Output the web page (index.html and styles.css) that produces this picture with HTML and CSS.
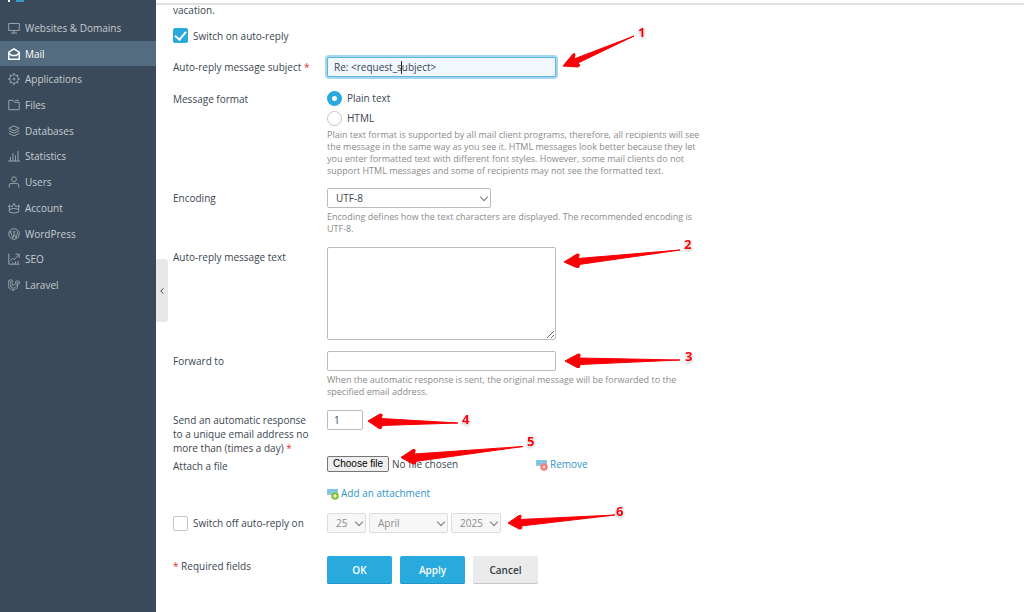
FILE: index.html
```html
<!DOCTYPE html>
<html lang="en">
<head>
    <meta charset="UTF-8">
    <meta name="viewport" content="width=device-width, initial-scale=1.0">
    <title>Auto-Reply</title>
    <link rel="stylesheet" href="styles.css">
</head>
<body>
    <aside class="sidebar">
        <svg class="logo" width="18" height="3" viewBox="0 0 18 3"><path d="M0 0h2v2H0z" fill="#fff"/><path d="M8 0h8v2H8z" fill="#3a9bc8"/></svg>
        <nav class="menu">
            <a href="#"><svg viewBox="0 0 12 12"><path d="M.7 1.5h10.6v7H.7zM3 11h6M6 8.5V11"/></svg>Websites &amp; Domains</a>
            <a href="#" class="active"><svg viewBox="0 0 12 12"><path d="M.8 4.2 6 .9l5.2 3.3v7H.8zM.8 5l3 2.6h4.4l3-2.6"/></svg>Mail</a>
            <a href="#"><svg viewBox="0 0 12 12"><circle cx="6" cy="6" r="4.2"/><circle cx="6" cy="6" r="1"/><path stroke-width="1.6" d="M6 .3v1.5M6 10.2v1.5M.3 6h1.5M10.2 6h1.5M2 2l1 1M9 9l1 1M2 10l1-1M9 3l1-1"/></svg>Applications</a>
            <a href="#"><svg viewBox="0 0 12 12"><path d="M6.5 3.3 5 1.3H.8v9.4h10.4V3.3zM7 1.3h4"/></svg>Files</a>
            <a href="#"><svg viewBox="0 0 12 12"><path d="M6 .8 11.2 3.3 6 5.8.8 3.3zM.8 5.7 6 8.2l5.2-2.5M.8 8.3 6 10.9l5.2-2.6"/></svg>Databases</a>
            <a href="#"><svg viewBox="0 0 12 12"><path d="M0 11h12M2.5 7v4M5 3v8M7.5 5.5V11M10 1v10"/></svg>Statistics</a>
            <a href="#"><svg viewBox="0 0 12 12"><circle cx="6" cy="3.2" r="2.4"/><path d="M1.2 11.7V9.4q0-2 2-2h5.6q2 0 2 2v2.3"/></svg>Users</a>
            <a href="#"><svg viewBox="0 0 12 12"><path d="M1.3 10V3L4 5l2-3.8L8 5l2.7-2v7q-4.700 2.200-9.400 0zM1.300 7.300q4.700-1.800 9.400 0M0 4.500h1.300M10.700 4.500H12"/></svg>Account</a>
            <a href="#"><svg viewBox="0 0 12 12"><circle cx="6" cy="6" r="5.3"/><path d="M1.500 3.800h2.300M5 3.800h2.500M2.500 4l2.300 6L6.200 6M5.600 4l2.300 6 1.400-4.200q.4-1.400-.6-2.300"/></svg>WordPress</a>
            <a href="#"><svg viewBox="0 0 12 12"><path d="M.8.5v10.700h10.700M2.500 7.500l2.300-2.300 1.500 1.500L11 1.500M7.500 1.200h3.700v3.700M5 11V9.500M7.500 11V8.500M10 11V8"/></svg>SEO</a>
            <a href="#"><svg viewBox="0 0 12 12"><path stroke-width=".8" d="M.6 1.500 2.400.6l1.900.9v5.200l-1.900 1.100M.6 1.500v7.300l4.500 2.700 4.400-2.700V5.900l1.900-1V2.700L9.500 1.600 7.600 2.700v2.200l1.900 1M2.400 2.500v5.300l2.700 1.600 4.400-2.600M2.400 2.500.6 1.500M2.400 2.500l1.900-1M7.600 4.900 4.300 6.700M9.500 3.800V5.900M7.600 2.700l1.900 1.100 1.900-1.100M5.100 9.400v2.100"/></svg>Laravel</a>
        </nav>
        <button class="collapse" type="button" aria-label="Collapse menu"><svg width="4" height="8" viewBox="0 0 4 8"><path d="M3.400 1.300.8 4l2.600 2.700"/></svg></button>
    </aside>

    <main class="content">
        <form class="form">
            <p class="intro">vacation.</p>
            <label class="check-row switch-on"><input type="checkbox" class="check" checked>Switch on auto-reply</label>

            <div class="row row-subject">
                <label for="subject">Auto-reply message subject <span class="req">*</span></label>
                <div class="subject-field">
                    <input type="text" id="subject" class="text focused" value="Re: &lt;request_subject&gt;">
                    <span class="caret"></span>
                </div>
            </div>

            <div class="row row-format">
                <span class="label">Message format</span>
                <div>
                    <label class="radio-row"><input type="radio" name="format" class="radio" checked>Plain text</label>
                    <label class="radio-row"><input type="radio" name="format" class="radio">HTML</label>
                    <p class="hint">Plain text format is supported by all mail client programs, therefore, all recipients will see the message in the same way as you see it. HTML messages look better because they let you enter formatted text with different font styles. However, some mail clients do not support HTML messages and some of recipients may not see the formatted text.</p>
                </div>
            </div>

            <div class="row row-encoding">
                <label for="encoding">Encoding</label>
                <div>
                    <span class="select encoding"><select id="encoding"><option>UTF-8</option></select></span>
                    <p class="hint">Encoding defines how the text characters are displayed. The recommended encoding is UTF-8.</p>
                </div>
            </div>

            <div class="row row-text">
                <label for="message">Auto-reply message text</label>
                <textarea id="message" class="text"></textarea>
            </div>

            <div class="row row-forward">
                <label for="forward">Forward to</label>
                <div>
                    <input type="text" id="forward" class="text">
                    <p class="hint">When the automatic response is sent, the original message will be forwarded to the specified email address.</p>
                </div>
            </div>

            <div class="row row-times">
                <label for="times">Send an automatic response to a unique email address no more than (times a day) <span class="req">*</span></label>
                <input type="text" id="times" class="text short" value="1">
            </div>

            <div class="row row-attach">
                <span class="label">Attach a file</span>
                <div>
                    <div class="attach">
                        <div class="file">
                            <input type="file" id="file">
                            <label for="file" class="file-button">Choose file</label>
                            <span>No file chosen</span>
                        </div>
                        <a href="#"><svg class="attach-icon" viewBox="0 0 12 12"><path d="M0 1h11v6H0z" fill="#8ccbe8"/><path d="M1 2.500h2M4 2.500h2M7 2.500h3M1 4.500h3" stroke="#6dbbe0"/><circle cx="8" cy="8" r="3.800" fill="#f77f7f"/><circle cx="8" cy="8" r="1.200" fill="#fff"/></svg>Remove</a>
                    </div>
                    <a href="#"><svg class="attach-icon" viewBox="0 0 12 12"><path d="M0 1h11v6H0z" fill="#8ccbe8"/><path d="M1 2.500h2M4 2.500h2M7 2.500h3M1 4.500h3" stroke="#6dbbe0"/><circle cx="8" cy="8" r="3.800" fill="#83c133"/><path d="M8 6v4M6 8h4" stroke="#fff"/></svg>Add an attachment</a>
                </div>
            </div>

            <div class="row row-date">
                <label class="check-row"><input type="checkbox" class="check">Switch off auto-reply on</label>
                <div class="dates">
                    <span class="select day"><select aria-label="Day" disabled><option>25</option></select></span>
                    <span class="select month"><select aria-label="Month" disabled><option>April</option></select></span>
                    <span class="select year"><select aria-label="Year" disabled><option>2025</option></select></span>
                </div>
            </div>

            <div class="row row-buttons">
                <span class="label"><span class="req">*</span> Required fields</span>
                <div class="buttons">
                    <button type="button" class="btn primary">OK</button>
                    <button type="button" class="btn primary">Apply</button>
                    <button type="button" class="btn">Cancel</button>
                </div>
            </div>
        </form>
    </main>

    <!-- numbered pointers over the form -->
    <svg class="pointers" width="1024" height="612" viewBox="0 0 1024 612">
        <g class="arrows">
            <path d="M563 66l10-12q2-1.500 2 1l-1 4L634 36 578 63l1 1q2 2-1 3z"/>
            <path d="M564 262l13-8q3-.5 2 2l-1 2.500L680 250 579 264.500l.5 1q0 3-3 2z"/>
            <path d="M565 361l13-7q3-.5 2 2l-1 2L680 360 580 364.500l0 1q0 3-3 2z"/>
            <path d="M368 421l12-7q3-.5 2 2l-1 2.500L458 423l-77 2.500 1 1q0 3-3 2z"/>
            <path d="M401 457.500l12-8q3-.5 2 2l-1 2.500L523 446.500 415 461.500l1 1q0 2-3 1.500z"/>
            <path d="M508 523l11-7.500q3-1 2 1.500l-1 2.500L615 515 521 526l1 1.500q0 2-3 1.500z"/>
        </g>
        <text x="638" y="37">1</text>
        <text x="684" y="249">2</text>
        <text x="685" y="361">3</text>
        <text x="462" y="424">4</text>
        <text x="527" y="446">5</text>
        <text x="616" y="516">6</text>
    </svg>
</body>
</html>
```
FILE: styles.css
```css
* {
    box-sizing: border-box;
}

body {
    margin: 0;
    min-height: 100vh;
    display: flex;
    position: relative;
    font-family: "Open Sans", sans-serif;
    font-size: 10px;
    line-height: 14px;
    color: #3b4550;
    background: #fff;
}

p {
    margin: 0;
}

a {
    color: #3095c9;
    text-decoration: none;
}

/* sidebar */
.sidebar {
    flex: 0 0 156px;
    position: relative;
    background: #3a4a5a;
}

.logo {
    display: block;
    margin-left: 8px;
}

.menu {
    display: grid;
    grid-auto-rows: 1fr;
    min-height: 283px;
    margin-top: 12px;
}

.menu a {
    display: flex;
    align-items: center;
    gap: 5px;
    padding-left: 8px;
    color: #c6cbd0;
}

.menu svg {
    width: 12px;
    height: 12px;
    fill: none;
    stroke: #99a1a8;
}

.menu a.active {
    background: #546c80;
    color: #fff;
}

.menu a.active svg {
    stroke: #fff;
    stroke-width: 1.5;
}

.collapse {
    position: absolute;
    left: 100%;
    top: 259px;
    width: 12px;
    height: 63px;
    padding: 0;
    border: 0;
    border-radius: 0 3px 3px 0;
    background: #e8e8e8;
}

.collapse svg {
    fill: none;
    stroke: #4a4a4a;
}

/* form */
.content {
    flex: 1;
    margin-top: 3px;
    padding-left: 17px;
    border-top: 2px solid #e0e0e0;
}

.form {
    max-width: 535px;
}

.intro {
    margin-top: -2px;
}

.row {
    display: grid;
    grid-template-columns: 137px 1fr;
    column-gap: 17px;
    align-items: start;
}

.req {
    color: #d33;
}

.check-row,
.radio-row {
    display: flex;
    align-items: center;
    gap: 5px;
}

.switch-on {
    margin-top: 11px;
}

.check,
.radio {
    appearance: none;
    width: 15px;
    height: 15px;
    margin: 0;
    border: 1px solid #c4c4c4;
    border-radius: 2px;
    background: #fff;
}

.check:checked {
    display: grid;
    place-items: center;
    border-color: #28aade;
    background: #28aade;
}

.check:checked::before {
    content: "";
    width: 5px;
    height: 9px;
    margin-bottom: 2px;
    border: solid #fff;
    border-width: 0 2px 2px 0;
    transform: rotate(40deg);
}

.radio {
    border-radius: 50%;
}

.radio:checked {
    border: 5px solid #28aade;
}

.radio-row {
    height: 20px;
}

.text {
    display: block;
    width: 229px;
    height: 20px;
    padding: 0 6px;
    border: 1px solid #bbb;
    border-radius: 2px;
    background: #fff;
    font: inherit;
    color: inherit;
}

.text.focused {
    border-color: #5db4dc;
    background: #f0f8fe;
    box-shadow: 0 0 0 2px #a5d8f0;
}

.subject-field {
    position: relative;
}

.caret {
    position: absolute;
    left: 74px;
    top: 4px;
    width: 1px;
    height: 13px;
    background: #222;
}

textarea.text {
    height: 93px;
}

.text.short {
    width: 36px;
}

.hint {
    font-size: 9px;
    line-height: 12px;
    color: #8b8b8b;
}

.select {
    display: block;
    position: relative;
}

.select select {
    appearance: none;
    display: block;
    width: 100%;
    height: 20px;
    padding: 0 8px;
    border: 1px solid #bbb;
    border-radius: 2px;
    background: #fff;
    font: inherit;
    color: inherit;
}

.select::after {
    content: "";
    position: absolute;
    right: 4px;
    top: 6px;
    width: 5px;
    height: 5px;
    border: solid #777;
    border-width: 0 1px 1px 0;
    transform: rotate(45deg);
    pointer-events: none;
}

.select select:disabled {
    border-color: #ddd;
    background: #f7f7f7;
    color: #8b8b8b;
    opacity: 1;
}

.encoding {
    width: 164px;
}

.day {
    width: 39px;
}

.month {
    width: 79px;
}

.year {
    width: 50px;
}

.dates {
    display: flex;
    gap: 3px;
}

.row-subject {
    margin-top: 14px;
}

.row-subject > label,
.row-encoding > label,
.row-text > label,
.row-forward > label,
.row-times > label {
    padding-top: 3px;
}

.row-format {
    margin-top: 11px;
}

.row-format > .label {
    padding-top: 4px;
}

.row-format .hint {
    margin-top: 1px;
}

.row-encoding {
    margin-top: 11px;
}

.row-encoding .hint,
.row-forward .hint {
    margin-top: 3px;
}

.row-text {
    margin-top: 12px;
}

.row-forward {
    margin-top: 11px;
}

.row-times {
    margin-top: 12px;
}

.row-attach {
    margin-top: 1px;
}

.row-attach > .label {
    padding-top: 3px;
}

.attach {
    display: flex;
    height: 16px;
    align-items: center;
    margin-bottom: 14px;
}

.file {
    display: flex;
    align-items: center;
    gap: 3px;
    width: 209px;
}

.file input {
    position: absolute;
    width: 1px;
    height: 1px;
    opacity: 0;
}

.file-button {
    width: 62px;
    height: 16px;
    border: 1px solid #767676;
    border-radius: 2px;
    background: #efefef;
    color: #000;
    font-family: "Liberation Sans", sans-serif;
    text-align: center;
}

.attach-icon {
    width: 12px;
    height: 12px;
    margin-right: 2px;
    vertical-align: -3px;
    fill: none;
}

.row-date {
    margin-top: 13px;
    align-items: center;
}

.row-date .check-row {
    white-space: nowrap;
}

.row-buttons {
    margin-top: 23px;
}

.row-buttons > .label {
    padding-top: 3px;
}

.buttons {
    display: flex;
    gap: 8px;
}

.btn {
    width: 65px;
    height: 28px;
    padding: 0;
    border: 0;
    border-radius: 2px;
    background: #ebebeb;
    box-shadow: inset 0 -1px #c8c8c8;
    font: inherit;
    font-weight: 600;
    color: #333c46;
}

.btn.primary {
    background: #28aade;
    box-shadow: inset 0 -1px #2295c4;
    color: #fff;
}

/* pointers */
.pointers {
    position: absolute;
    left: 0;
    top: 0;
    pointer-events: none;
}

.arrows {
    fill: #f90006;
    stroke: #f90006;
    stroke-linejoin: round;
}

.pointers text {
    font-size: 13px;
    font-weight: 700;
    fill: #f90006;
    stroke: #fff;
    stroke-width: 1px;
    paint-order: stroke;
    filter: drop-shadow(0 1px 1px #bbb);
}
```
